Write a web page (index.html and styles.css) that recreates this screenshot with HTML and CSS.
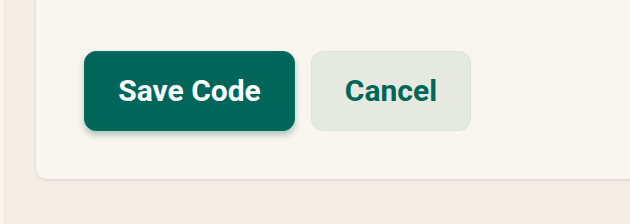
FILE: index.html
```html
<!DOCTYPE html>
<html>
<head>
<meta charset="utf-8">
<link rel="stylesheet" href="styles.css">
</head>
<body>
<div class="layout">
  <aside class="sidebar"></aside>
  <main class="main">
    <section class="card">
      <div class="actions">
        <button class="btn btn-primary">Save Code</button>
        <button class="btn btn-secondary">Cancel</button>
      </div>
    </section>
  </main>
</div>
</body>
</html>
```
FILE: styles.css
```css
html, body {
  margin: 0;
  padding: 0;
  background: #f3ede6;
  font-family: Roboto, "Noto Sans", sans-serif;
  overflow: hidden;
}
.layout {
  display: flex;
  height: 224px;
}
.sidebar {
  width: 4px;
  flex: none;
  background: #f9f5ef;
  border-right: 1px solid #ece6df;
}
.main {
  flex: 1;
  padding-left: 31px;
  overflow: hidden;
}
.card {
  width: 700px;
  margin-top: -20px;
  padding: 71px 48px 48px;
  background: #f9f5ef;
  border-radius: 10px;
  box-shadow: 0 1px 3px rgba(60, 40, 20, 0.12);
}
.actions {
  display: flex;
  gap: 16px;
}
.btn {
  font-family: Roboto, "Noto Sans", sans-serif;
  font-weight: 700;
  font-size: 30px;
  line-height: 32px;
  padding: 23px 0;
  border-radius: 12px;
  cursor: pointer;
  text-align: center;
}
.btn-primary {
  background: #00665a;
  color: #ffffff;
  border: 1px solid #0b6d61;
  box-shadow: 0 4px 6px rgba(0, 90, 78, 0.3);
  width: 211px;
}
.btn-secondary {
  background: #e5e9df;
  color: #00665a;
  border: 1px solid #dee3d8;
  width: 160px;
}
```
